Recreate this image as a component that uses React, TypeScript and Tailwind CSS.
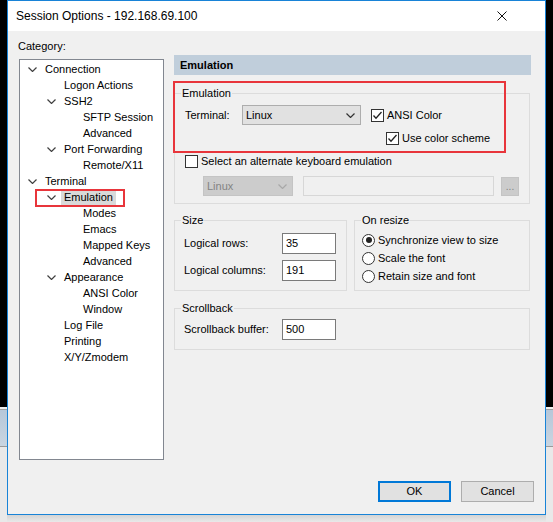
import React from "react";

const font = { fontFamily: '"Liberation Sans", Arial, sans-serif' };

type Node = { label: string; level: number; open?: boolean; selected?: boolean };

const TREE: Node[] = [
  { label: "Connection", level: 0, open: true },
  { label: "Logon Actions", level: 1 },
  { label: "SSH2", level: 1, open: true },
  { label: "SFTP Session", level: 2 },
  { label: "Advanced", level: 2 },
  { label: "Port Forwarding", level: 1, open: true },
  { label: "Remote/X11", level: 2 },
  { label: "Terminal", level: 0, open: true },
  { label: "Emulation", level: 1, open: true, selected: true },
  { label: "Modes", level: 2 },
  { label: "Emacs", level: 2 },
  { label: "Mapped Keys", level: 2 },
  { label: "Advanced", level: 2 },
  { label: "Appearance", level: 1, open: true },
  { label: "ANSI Color", level: 2 },
  { label: "Window", level: 2 },
  { label: "Log File", level: 1 },
  { label: "Printing", level: 1 },
  { label: "X/Y/Zmodem", level: 1 },
];

const INDENT = ["pl-0", "pl-[19px]", "pl-[38px]"];

function Chevron({ color = "#404040" }: { color?: string }) {
  return (
    <svg width="9" height="5" viewBox="0 0 9 5" className="block">
      <path d="M0.5 0.5 L4.5 4.5 L8.5 0.5" fill="none" stroke={color} strokeWidth="1.2" />
    </svg>
  );
}

function Checkbox({ checked }: { checked?: boolean }) {
  return (
    <span className="flex h-[13px] w-[13px] shrink-0 items-center justify-center border border-[#333333] bg-white">
      {checked && (
        <svg width="11" height="11" viewBox="0 0 11 11" className="block">
          <path d="M1.5 5.5 L4 8.2 L9.5 2" fill="none" stroke="#222222" strokeWidth="1.3" />
        </svg>
      )}
    </span>
  );
}

function Radio({ checked }: { checked?: boolean }) {
  return (
    <span className="flex h-[13px] w-[13px] shrink-0 items-center justify-center rounded-full border border-[#333333] bg-white">
      {checked && <span className="h-[6px] w-[6px] rounded-full bg-[#222222]" />}
    </span>
  );
}

function TextBox({ value }: { value: string }) {
  return (
    <div className="flex h-[21px] w-[54px] items-center border border-[#7a7a7a] bg-white pl-[3px] text-[11px]">
      {value}
    </div>
  );
}

function Strip() {
  return (
    <div className="flex h-full w-[7px] shrink-0 flex-col">
      <div className="h-[407px] bg-black" />
      <div className="h-[2px] bg-[#f0f0f0]" />
      <div className="h-[1px] bg-[#a0a0a0]" />
      <div className="h-[36px] bg-gradient-to-b from-[#b6c7d9] to-[#c9d5e1]" />
      <div className="h-[1px] bg-[#9a9a9a]" />
      <div className="flex-1 bg-[#e9e9e9]" />
    </div>
  );
}

export default function App() {
  return (
    <div className="flex h-[522px] w-[553px] overflow-hidden bg-[#e9e9e9] text-black" style={font}>
      <Strip />
      <div className="flex w-[539px] shrink-0 flex-col">
        <div className="relative flex h-[515px] flex-col border border-[#1883d7] bg-[#f0f0f0]">
          {/* Title bar */}
          <div className="flex h-[30px] shrink-0 items-center justify-between bg-white pl-[8px] pr-[38px]">
            <span className="text-[12px]">Session Options - 192.168.69.100</span>
            <svg width="10" height="10" viewBox="0 0 10 10" className="block">
              <path d="M0.5 0.5 L9.5 9.5 M9.5 0.5 L0.5 9.5" stroke="#111111" strokeWidth="1" />
            </svg>
          </div>

          <div className="flex flex-1 items-start pl-[11px] text-[11px]">
            {/* Category tree */}
            <div className="mt-[7px] w-[145px] shrink-0">
              <div className="-ml-[1px] h-[16px] leading-[16px]">Category:</div>
              <div className="mt-[5px] h-[401px] border border-[#828790] bg-white pt-[1px]">
                {TREE.map((n, i) => (
                  <div key={i} className={`flex h-[16px] items-center leading-[16px] ${INDENT[n.level]}`}>
                    <span className="flex w-[25px] shrink-0 pl-[8px]">{n.open && <Chevron />}</span>
                    <span className={n.selected ? "-ml-[3px] bg-[#d9d9d9] pl-[3px] pr-[3px]" : ""}>{n.label}</span>
                  </div>
                ))}
              </div>
            </div>

            {/* Right panel */}
            <div className="ml-[10px] mt-[24px] w-[357px]">
              <div className="h-[20px] bg-[#c0cedb] pl-[6px] text-[11px] font-bold leading-[20px]">Emulation</div>

              <fieldset className="mt-[10px] w-[356px] border border-[#dcdcdc] pb-[7px]">
                <legend className="ml-[6px] px-[1px] leading-[16px]">Emulation</legend>
                <div className="mt-[4px] flex h-[20px] items-center pl-[10px]">
                  <span className="w-[57px]">Terminal:</span>
                  <div className="flex h-[20px] w-[119px] items-center justify-between border border-[#adadad] bg-[#e1e1e1] pl-[3px] pr-[5px]">
                    <span>Linux</span>
                    <Chevron color="#333333" />
                  </div>
                  <span className="ml-[10px]">
                    <Checkbox checked />
                  </span>
                  <span className="ml-[3px]">ANSI Color</span>
                </div>
                <div className="mt-[3px] flex h-[20px] items-center pl-[211px]">
                  <Checkbox checked />
                  <span className="ml-[3px]">Use color scheme</span>
                </div>
                <div className="mt-[3px] flex h-[20px] items-center pl-[10px]">
                  <Checkbox />
                  <span className="ml-[3px]">Select an alternate keyboard emulation</span>
                </div>
                <div className="mt-[5px] flex h-[20px] items-center pl-[28px]">
                  <div className="flex h-[20px] w-[90px] items-center justify-between border border-[#c4c4c4] bg-[#cccccc] pl-[3px] pr-[5px] text-[#838383]">
                    <span>Linux</span>
                    <Chevron color="#a8a8a8" />
                  </div>
                  <div className="ml-[10px] h-[20px] w-[191px] border border-[#d7d7d7] bg-[#f0f0f0]" />
                  <div className="ml-[7px] flex h-[19px] w-[18px] items-end justify-center border border-[#c4c4c4] bg-[#cccccc] pb-[3px] text-[10px] leading-[10px] text-[#838383]">
                    ...
                  </div>
                </div>
              </fieldset>

              <div className="mt-[8px] flex w-[356px] gap-[7px]">
                <fieldset className="w-[173px] shrink-0 border border-[#dcdcdc] pb-[9px] pl-[9px]">
                  <legend className="-ml-[3px] px-[1px] leading-[16px]">Size</legend>
                  <div className="mt-[5px] flex h-[21px] items-center">
                    <span className="w-[98px]">Logical rows:</span>
                    <TextBox value="35" />
                  </div>
                  <div className="mt-[6px] flex h-[21px] items-center">
                    <span className="w-[98px]">Logical columns:</span>
                    <TextBox value="191" />
                  </div>
                </fieldset>
                <fieldset className="flex-1 border border-[#dcdcdc] pl-[7px]">
                  <legend className="-ml-[1px] px-[1px] leading-[16px]">On resize</legend>
                  <div className="mt-[3px] flex h-[18px] items-center">
                    <Radio checked />
                    <span className="ml-[3px]">Synchronize view to size</span>
                  </div>
                  <div className="flex h-[18px] items-center">
                    <Radio />
                    <span className="ml-[3px]">Scale the font</span>
                  </div>
                  <div className="flex h-[18px] items-center">
                    <Radio />
                    <span className="ml-[3px]">Retain size and font</span>
                  </div>
                </fieldset>
              </div>

              <fieldset className="mt-[9px] w-[356px] border border-[#dcdcdc] pb-[9px] pl-[9px]">
                <legend className="-ml-[3px] px-[1px] leading-[16px]">Scrollback</legend>
                <div className="mt-[3px] flex h-[21px] items-center">
                  <span className="w-[98px]">Scrollback buffer:</span>
                  <TextBox value="500" />
                </div>
              </fieldset>
            </div>
          </div>

          {/* Buttons */}
          <div className="flex justify-end gap-[10px] bg-[#f0f0f0] pb-[12px] pr-[11px] text-[11px]">
            <button className="h-[21px] w-[73px] border-2 border-[#0078d7] bg-[#e1e1e1]">OK</button>
            <button className="h-[21px] w-[73px] border border-[#adadad] bg-[#e1e1e1]">Cancel</button>
          </div>

          {/* Red annotation boxes */}
          <div className="pointer-events-none absolute left-[27px] top-[188px] h-[18px] w-[90px] border-2 border-[#e8353b]" />
          <div className="pointer-events-none absolute left-[165px] top-[80px] h-[72px] w-[333px] border-2 border-[#e8353b]" />
        </div>
        <div className="h-[7px] bg-gradient-to-b from-[#d4d4d4] to-[#e9e9e9]" />
      </div>
      <Strip />
    </div>
  );
}
